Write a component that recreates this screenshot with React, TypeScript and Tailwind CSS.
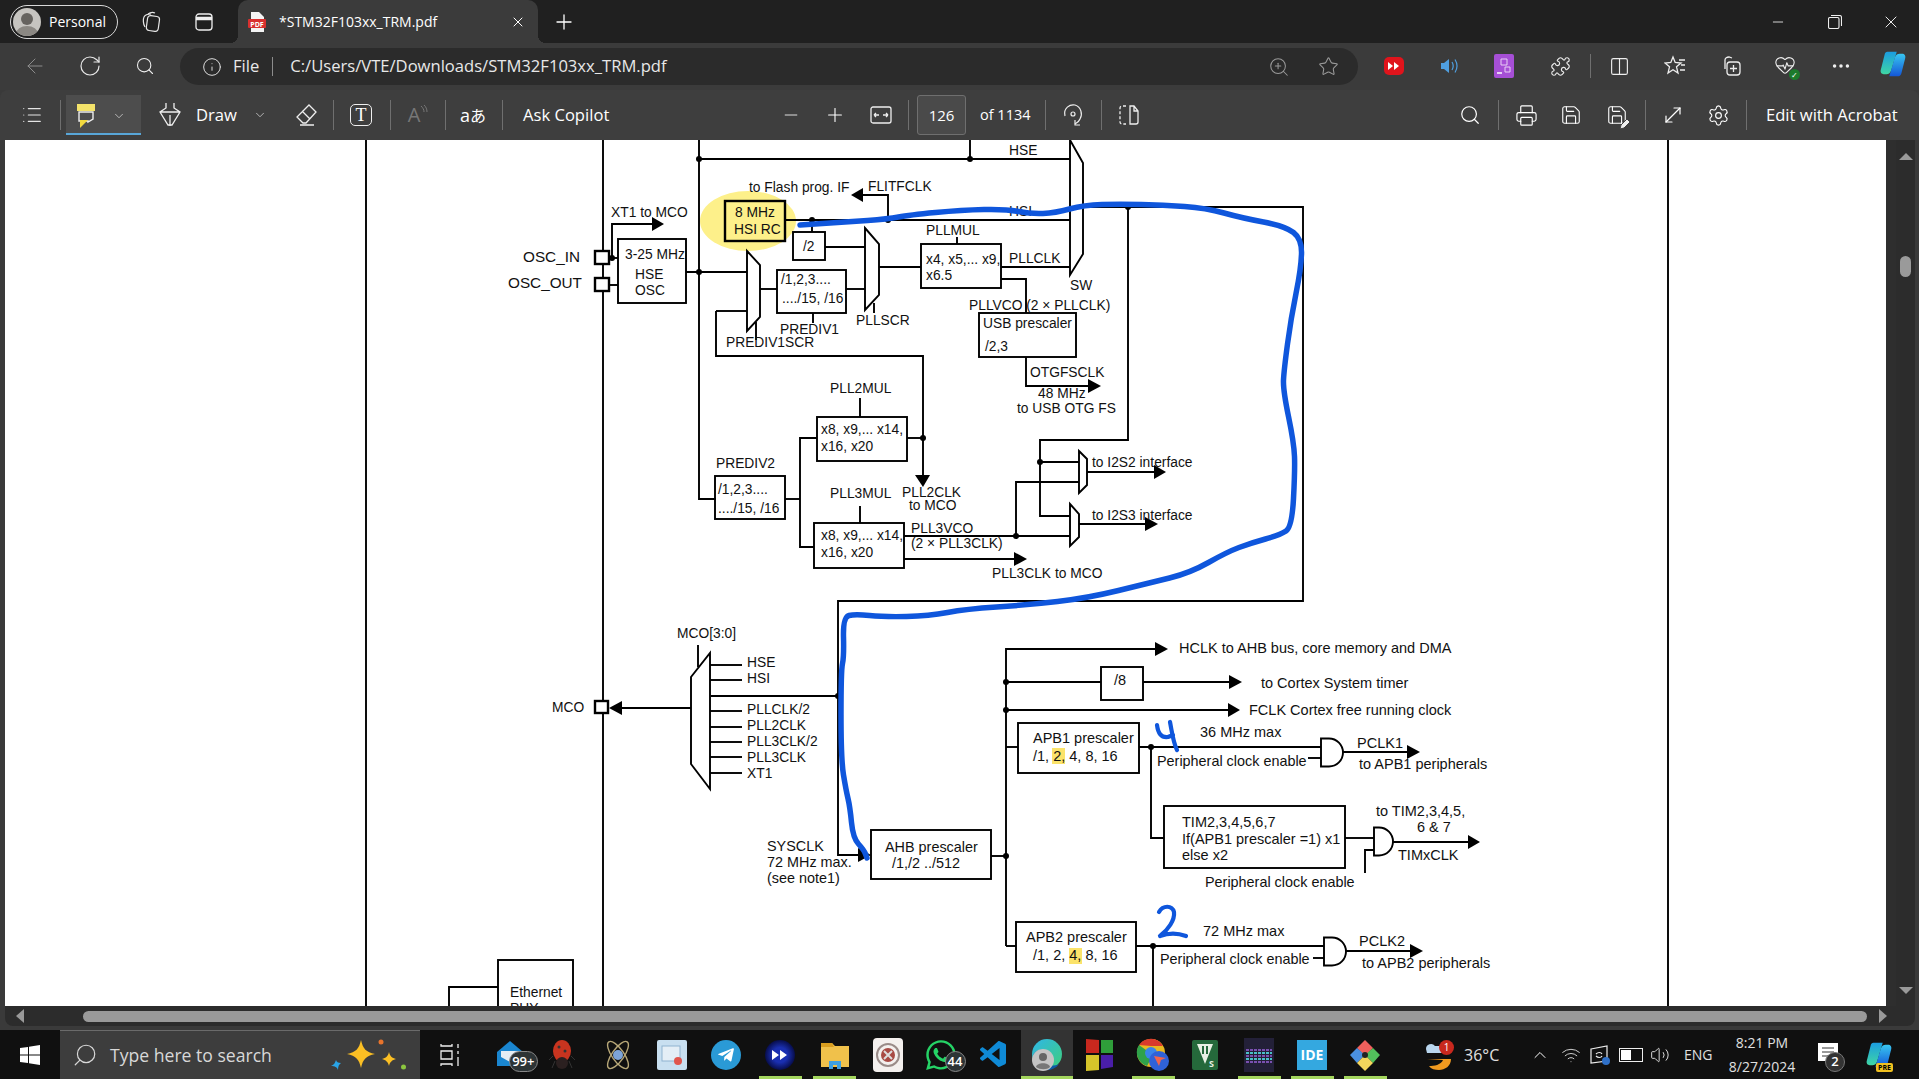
import { ArrowLeft, RotateCw, Search, Info, ZoomIn, Star, Puzzle, Columns2, Ellipsis, HeartPulse, Minus, Plus, Printer, Save, MoveDiagonal, Settings, X, ChevronDown, ChevronUp, Wifi, Volume2, List } from "lucide-react";
import { FaTelegramPlane, FaWhatsapp } from "react-icons/fa";
import { VscVscode } from "react-icons/vsc";

type P = [number, number];

function smooth(pts: P[]) {
  let d = `M${pts[0][0]} ${pts[0][1]}`;
  for (let i = 1; i < pts.length - 1; i++) {
    const mx = (pts[i][0] + pts[i + 1][0]) / 2;
    const my = (pts[i][1] + pts[i + 1][1]) / 2;
    d += ` Q${pts[i][0]} ${pts[i][1]} ${mx} ${my}`;
  }
  const last = pts[pts.length - 1];
  return d + ` L${last[0]} ${last[1]}`;
}

const bluePath: P[] = [
  [800, 225], [847, 222], [888, 219], [909, 215], [962, 210], [1006, 209], [1031, 214], [1055, 213], [1084, 205], [1120, 204],
  [1163, 205], [1206, 208], [1242, 218], [1285, 226], [1302, 239], [1301, 269], [1291, 318], [1284, 370], [1283, 390], [1294, 443],
  [1295, 470], [1292, 527], [1280, 535], [1251, 543], [1227, 552], [1190, 573], [1149, 583], [1088, 598], [1027, 605], [966, 609],
  [929, 616], [884, 617], [855, 614], [843, 617], [844, 657], [841, 670], [841, 760], [846, 790], [850, 807], [853, 838], [864, 850], [867, 858],
];

const wires = [
  "603,140 603,1006", "366,140 366,1006", "1668,140 1668,1006",
  "699,140 699,499 716,499", "699,159 1070,159", "970,140 970,159",
  "785,220 1070,220", "812,220 812,232", "888,220 888,195 862,195",
  "609,258 618,258", "609,285 618,285", "612,258 612,224 653,224",
  "686,272 747,272", "756,322 756,340", "716,311 747,311", "716,311 716,356 923,356 923,476",
  "760,289 777,289", "846,289 866,289", "813,313 813,323",
  "825,247 866,247", "874,303 874,313", "879,267 921,267", "957,237 957,244",
  "1001,267 1070,267", "1001,279 1026,279 1026,313", "1026,357 1026,386 1089,386",
  "860,398 860,417", "907,438 923,438", "817,438 800,438 800,547 814,547", "785,499 800,499",
  "860,506 860,523", "904,536 1070,536", "1016,536 1016,482 1079,482", "904,559 1014,559",
  "1083,207 1303,207 1303,601 838,601 838,855 859,855", "1128,207 1128,440 1040,440 1040,516 1070,516", "1040,462 1079,462",
  "1087,472 1155,472", "1079,524 1146,524",
  "622,708 691,708", "698,645 698,667", "710,665 742,665", "710,680 742,680", "711,696 838,696",
  "710,711 742,711", "710,727 742,727", "710,742 742,742", "710,757 742,757", "710,773 742,773",
  "991,856 1006,856", "1006,648 1006,946", "1006,649 1156,649", "1006,682 1101,682", "1143,682 1230,682", "1006,710 1228,710",
  "1006,747 1018,747", "1139,747 1321,747", "1308,758 1321,758", "1340,752 1408,752", "1151,747 1151,838 1164,838",
  "1345,838 1374,838", "1365,873 1365,850 1374,850", "1393,842 1469,842",
  "1006,946 1016,946", "1136,946 1324,946", "1313,958 1324,958", "1344,951 1411,951", "1153,946 1153,1006",
  "449,1006 449,987 498,987",
];

const boxes: number[][] = [
  [725, 201, 60, 40], [618, 239, 68, 64], [777, 270, 69, 43], [793, 232, 32, 28], [921, 244, 80, 44], [979, 313, 97, 44],
  [817, 417, 90, 44], [715, 476, 70, 43], [814, 523, 90, 45], [871, 830, 120, 49], [1101, 667, 42, 33], [1018, 723, 121, 50],
  [1164, 806, 181, 62], [1016, 922, 120, 50], [498, 960, 75, 60],
];

const pins: number[][] = [[595, 251, 14, 13], [595, 278, 14, 13], [595, 701, 13, 12]];

const muxes = [
  "747,251 760,265 760,317 747,331", "865,228 879,244 879,295 865,310", "1079,451 1087,459 1087,485 1079,493",
  "1070,504 1079,514 1079,537 1070,546", "691,677 710,653 710,789 691,764",
];

const arrows = [
  "851,195 863,188 863,202", "664,224 652,217 652,231", "1101,386 1088,379 1088,393", "923,487 915,475 930,475",
  "1166,472 1154,465 1154,479", "1158,524 1145,517 1145,531", "1027,559 1014,552 1014,566", "609,708 622,701 622,715",
  "871,855 858,848 858,862", "1168,649 1155,642 1155,656", "1242,682 1229,675 1229,689", "1240,710 1228,703 1228,717",
  "1420,752 1407,745 1407,759", "1480,842 1468,835 1468,849", "1423,951 1410,944 1410,958",
];

const dots: P[] = [[699, 159], [970, 159], [812, 220], [888, 220], [612, 258], [699, 272], [923, 438], [1016, 536], [1040, 462], [1128, 207], [838, 696], [1006, 682], [1006, 710], [1006, 856], [1151, 747], [1153, 946]];

const labels: [number, number, string, number?][] = [
  [1009, 155, "HSE"], [1070, 290, "SW"], [735, 217, "8 MHz"], [734, 234, "HSI RC"], [749, 192, "to Flash prog. IF"], [868, 191, "FLITFCLK"], [1009, 216, "HSI"],
  [625, 259, "3-25 MHz"], [635, 279, "HSE"], [635, 295, "OSC"], [523, 262, "OSC_IN", 15.3], [508, 288, "OSC_OUT", 15.3], [611, 217, "XT1 to MCO"],
  [726, 347, "PREDIV1SCR"], [781, 284, "/1,2,3...."], [782, 303, "..../15, /16"], [780, 334, "PREDIV1"], [803, 251, "/2"], [856, 325, "PLLSCR"],
  [926, 264, "x4, x5,... x9,"], [926, 280, "x6.5"], [926, 235, "PLLMUL"], [1009, 263, "PLLCLK"], [969, 310, "PLLVCO (2 × PLLCLK)"],
  [983, 328, "USB prescaler"], [985, 351, "/2,3"], [1030, 377, "OTGFSCLK"], [1038, 398, "48 MHz"], [1017, 413, "to USB OTG FS"],
  [830, 393, "PLL2MUL"], [821, 434, "x8, x9,... x14,"], [821, 451, "x16, x20"], [716, 468, "PREDIV2"], [718, 494, "/1,2,3...."], [718, 513, "..../15, /16"],
  [830, 498, "PLL3MUL"], [821, 540, "x8, x9,... x14,"], [821, 557, "x16, x20"], [902, 497, "PLL2CLK"], [909, 510, "to MCO"], [911, 533, "PLL3VCO"], [911, 548, "(2 × PLL3CLK)"],
  [992, 578, "PLL3CLK to MCO"], [1092, 467, "to I2S2 interface"], [1092, 520, "to I2S3 interface"],
  [552, 712, "MCO"], [677, 638, "MCO[3:0]"], [747, 667, "HSE"], [747, 683, "HSI"], [747, 714, "PLLCLK/2"], [747, 730, "PLL2CLK"], [747, 746, "PLL3CLK/2"], [747, 762, "PLL3CLK"], [747, 778, "XT1"],
  [767, 851, "SYSCLK", 14.4], [767, 867, "72 MHz max.", 14.4], [767, 883, "(see note1)", 14.4], [885, 852, "AHB prescaler", 14.4], [892, 868, "/1,/2 ../512", 14.4],
  [510, 997, "Ethernet"], [510, 1013, "PHY"],
  [1179, 653, "HCLK to AHB bus, core memory and DMA", 14.5], [1114, 685, "/8", 14.5], [1261, 688, "to Cortex System timer", 14.5], [1249, 715, "FCLK Cortex free running clock", 14.5],
  [1033, 743, "APB1 prescaler", 14.5], [1033, 761, "/1, 2, 4, 8, 16", 14.5], [1200, 737, "36 MHz max", 14.5], [1157, 766, "Peripheral clock enable", 14.4],
  [1357, 748, "PCLK1", 14.5], [1359, 769, "to APB1 peripherals", 14.5], [1182, 827, "TIM2,3,4,5,6,7", 14.5], [1182, 844, "If(APB1 prescaler =1) x1", 14.5], [1182, 860, "else x2", 14.5],
  [1376, 816, "to TIM2,3,4,5,", 14.5], [1417, 832, "6 & 7", 14.5], [1398, 860, "TIMxCLK", 14.5], [1205, 887, "Peripheral clock enable", 14.4],
  [1026, 942, "APB2 prescaler", 14.5], [1033, 960, "/1, 2, 4, 8, 16", 14.5], [1203, 936, "72 MHz max", 14.5], [1160, 964, "Peripheral clock enable", 14.4],
  [1359, 946, "PCLK2", 14.5], [1362, 968, "to APB2 peripherals", 14.5],
];

function ClockTree() {
  return (
    <svg viewBox="5 140 1881 866" className="h-full w-full [font-family:'Liberation_Sans',sans-serif]">
      <ellipse cx="748" cy="221" rx="48" ry="30" fill="#fdf08a" />
      <rect x="1052" y="748" width="13" height="16" fill="#fbe36a" />
      <rect x="1069" y="948" width="13" height="16" fill="#fbe36a" />
      <g fill="none" stroke="#000" strokeWidth="1.9">
        {wires.map((w) => <polyline key={w} points={w} />)}
        {boxes.map((b) => <rect key={b.join()} x={b[0]} y={b[1]} width={b[2]} height={b[3]} strokeWidth={b[0] === 725 ? 2.4 : 1.9} />)}
        {muxes.map((m) => <polygon key={m} points={m} fill="#fff" />)}
        <polyline points="1070,140 1083,163 1083,254 1070,275 1070,140" />
        <path d="M1321 738.5h8a14 14 0 0 1 0 28h-8z" fill="#fff" />
        <path d="M1374 827.5h5a14 14 0 0 1 0 28h-5z" fill="#fff" />
        <path d="M1324 937.5h8a14 14 0 0 1 0 28h-8z" fill="#fff" />
      </g>
      <g fill="#fff" stroke="#000" strokeWidth="2.4">
        {pins.map((p) => <rect key={p.join()} x={p[0]} y={p[1]} width={p[2]} height={p[3]} />)}
      </g>
      {arrows.map((a) => <polygon key={a} points={a} fill="#000" />)}
      {dots.map((d) => <circle key={d.join()} cx={d[0]} cy={d[1]} r="3" fill="#000" />)}
      {labels.map(([x, y, t, s]) => (
        <text key={`${x}-${y}`} x={x} y={y} fontSize={s ?? 13.8} fill="#111">{t}</text>
      ))}
      <g fill="none" stroke="#0f56dc" strokeLinecap="round" strokeLinejoin="round">
        <path d={smooth(bluePath)} strokeWidth="5.5" />
        <path d="M1157 725C1158 733 1161 738 1168 737L1173 735M1170 722C1172 732 1173 742 1177 750" strokeWidth="4.2" />
        <path d="M1159 912C1163 905 1172 905 1174 912C1175 920 1168 930 1160 936C1168 933 1178 933 1186 936" strokeWidth="4.2" />
      </g>
    </svg>
  );
}

function CopilotLogo({ size = 30 }: { size?: number }) {
  return (
    <svg width={size} height={size} viewBox="0 0 30 30">
      <defs>
        <linearGradient id="cpa" x1="0" y1="0" x2="0" y2="1"><stop offset="0" stopColor="#1b9de0" /><stop offset="1" stopColor="#3fd6a4" /></linearGradient>
        <linearGradient id="cpb" x1="0" y1="0" x2="0" y2="1"><stop offset="0" stopColor="#38c6f0" /><stop offset="1" stopColor="#1457d8" /></linearGradient>
      </defs>
      <path d="M9 2h10l-6 20c-1 3-3 4-5 4H5c-2 0-4-2-3-5L6 5c.5-2 1.5-3 3-3z" fill="url(#cpa)" />
      <path d="M21 28H11l6-20c1-3 3-4 5-4h3c2 0 4 2 3 5l-4 16c-.5 2-1.5 3-3 3z" fill="url(#cpb)" />
    </svg>
  );
}

function Sep() {
  return <div className="h-[30px] w-px shrink-0 bg-[#6f6f6f]" />;
}

function IconBox({ className = "", children }: { className?: string; children: React.ReactNode }) {
  return <div className={`flex h-7 w-7 shrink-0 items-center justify-center ${className}`}>{children}</div>;
}

function TitleBar() {
  return (
    <div className="flex h-[43px] shrink-0 items-center bg-[#202020] text-white">
      <div className="ml-[10px] flex h-[34px] w-[108px] items-center rounded-full border-[1.5px] border-[#d8d8d8]">
        <svg width="28" height="28" viewBox="0 0 28 28" className="ml-[2px]">
          <clipPath id="av"><circle cx="14" cy="14" r="14" /></clipPath>
          <g clipPath="url(#av)">
            <rect width="28" height="28" fill="#c6c4c0" />
            <circle cx="14" cy="11" r="6" fill="#66635f" />
            <ellipse cx="14" cy="26" rx="11" ry="8" fill="#8b8883" />
          </g>
        </svg>
        <span className="ml-[8px] text-[14px]">Personal</span>
      </div>
      <IconBox className="ml-[19px]">
        <svg width="22" height="22" viewBox="0 0 22 22" fill="none" stroke="#e6e6e6" strokeWidth="1.2">
          <rect x="7" y="5" width="12" height="15" rx="3" transform="rotate(8 13 12)" />
          <path d="M5 16C3 13 3 8 4 6c1-2 4-3 7-3" /><path d="M8 3c2-1.500 5-2 7-1" />
        </svg>
      </IconBox>
      <IconBox className="ml-[25px]">
        <svg width="18" height="18" viewBox="0 0 18 18" fill="none" stroke="#eee" strokeWidth="1.3">
          <rect x="1" y="1" width="16" height="16" rx="3" /><path d="M1 5.500h16" strokeWidth="3.500" />
        </svg>
      </IconBox>
      <div className="relative ml-5 flex h-[43px] w-[300px] items-center rounded-t-[10px] bg-[#3b3b3b] pl-[10px] text-[14px]">
        <div className="absolute bottom-0 -left-2 h-2 w-2 bg-[radial-gradient(circle_at_0_0,transparent_8px,#3b3b3b_8px)]" />
        <div className="absolute -right-2 bottom-0 h-2 w-2 bg-[radial-gradient(circle_at_100%_0,transparent_8px,#3b3b3b_8px)]" />
        <svg width="18" height="20" viewBox="0 0 18 20">
          <path d="M3 0h8l5 5v15H3z" fill="#f4f4f4" />
          <rect x="0" y="7" width="18" height="9" rx="1" fill="#d8302f" />
          <text x="9" y="14.500" textAnchor="middle" fontSize="7" fontWeight="700" fill="#fff">PDF</text>
        </svg>
        <span className="ml-[13px]">*STM32F103xx_TRM.pdf</span>
        <X size={16} strokeWidth={1.5} className="absolute left-[272px]" />
      </div>
      <IconBox className="ml-[12px]"><Plus size={24} strokeWidth={1.3} /></IconBox>
      <div className="ml-auto flex h-full">
        <div className="flex w-[57px] items-center justify-center"><Minus size={16} strokeWidth={1.2} /></div>
        <div className="flex w-[57px] items-center justify-center">
          <svg width="14" height="14" viewBox="0 0 14 14" fill="none" stroke="#eee" strokeWidth="1.1">
            <rect x="0.500" y="2.500" width="10.500" height="11" rx="1.500" /><path d="M3 .5h8.500a2 2 0 0 1 2 2V11" />
          </svg>
        </div>
        <div className="flex w-[56px] items-center justify-center"><X size={20} strokeWidth={1.1} /></div>
      </div>
    </div>
  );
}

function AddressBar() {
  return (
    <div className="flex h-[47px] shrink-0 items-start bg-[#3b3b3b] pt-[5px] text-white">
      <IconBox className="mt-1 ml-[21px]"><ArrowLeft size={24} strokeWidth={1} className="text-[#8c8c8c]" /></IconBox>
      <IconBox className="mt-1 ml-[27px]"><RotateCw size={24} strokeWidth={1.2} className="text-[#e8e8e8]" /></IconBox>
      <IconBox className="mt-1 ml-[27px]"><Search size={20} strokeWidth={1.3} className="text-[#eee]" /></IconBox>
      <div className="ml-[21px] flex h-[37px] w-[1178px] items-center rounded-full bg-[#2b2b2b]">
        <Info size={20} strokeWidth={1.2} className="ml-[22px] text-[#ddd]" />
        <span className="ml-[11px] text-[16.6px] text-[#e8e8e8]">File</span>
        <div className="ml-[13px] h-[19px] w-px bg-[#8c8c8c]" />
        <span className="ml-[17px] text-[16.6px] text-[#e8e8e8]">C:/Users/VTE/Downloads/STM32F103xx_TRM.pdf</span>
        <ZoomIn size={22} strokeWidth={1.1} className="mr-[28px] ml-auto text-[#9a9a9a]" />
        <Star size={21} strokeWidth={1.2} className="mr-[19px] text-[#9a9a9a]" />
      </div>
      <IconBox className="mt-1 ml-[22px]">
        <svg width="20" height="18" viewBox="0 0 20 18"><rect width="20" height="18" rx="5" fill="#e0141c" /><path d="M4 5l5 4-5 4zM10 5l5 4-5 4z" fill="#fff" /></svg>
      </IconBox>
      <IconBox className="mt-1 ml-[27px]">
        <svg width="18" height="18" viewBox="0 0 18 18" fill="none"><path d="M1 6h3l5-4v14l-5-4H1z" fill="#4f9fe0" /><path d="M12 5c1.500 2.500 1.500 5.500 0 8M15 2.500c2.500 4 2.500 9 0 13" stroke="#4f9fe0" strokeWidth="1.200" /></svg>
      </IconBox>
      <IconBox className="mt-1 ml-[27px]">
        <svg width="20" height="24" viewBox="0 0 20 24"><rect width="20" height="24" rx="2" fill="#a64fd6" /><path d="M7 5h6v6H7zM11 13h5v5h-5z" fill="none" stroke="#e8d0f5" strokeWidth="1" /><path d="M3 19h5" stroke="#e8d0f5" strokeWidth="2" /></svg>
      </IconBox>
      <IconBox className="mt-1 ml-[28px]"><Puzzle size={21} strokeWidth={1.3} className="text-[#eee]" /></IconBox>
      <div className="mt-[6px] ml-4"><div className="h-6 w-px bg-[#6f6f6f]" /></div>
      <IconBox className="mt-1 ml-[14px]"><Columns2 size={21} strokeWidth={1.3} className="text-[#eee]" /></IconBox>
      <IconBox className="mt-1 ml-[28px]">
        <svg width="22" height="22" viewBox="0 0 22 22" fill="none" stroke="#eee" strokeWidth="1.300"><path d="M9 2l2.200 5.500L17 8l-4.500 3.800L14 18l-5-3.300L4 18l1.500-6.200L1 8l5.800-.5z" /><path d="M15 5h6M17 10h4M16 15h5" /></svg>
      </IconBox>
      <IconBox className="mt-1 ml-[28px]">
        <svg width="22" height="22" viewBox="0 0 22 22" fill="none" stroke="#eee" strokeWidth="1.300"><path d="M5 14V5c0-2 2-3 4-3l3 1" /><rect x="7" y="7" width="13" height="13" rx="3" /><path d="M13.500 10v7M10 13.500h7" /></svg>
      </IconBox>
      <div className="relative mt-1 ml-[27px] h-7 w-7">
        <HeartPulse size={22} strokeWidth={1.2} className="mt-[2px] ml-[2px] text-[#eee]" />
        <div className="absolute right-0 bottom-0 flex h-[11px] w-[11px] items-center justify-center rounded-full bg-[#1c7a2c] text-[8px] leading-none text-white">✓</div>
      </div>
      <IconBox className="mt-1 ml-[27px]"><Ellipsis size={22} strokeWidth={1.8} className="text-[#eee]" /></IconBox>
      <IconBox className="mt-[2px] ml-6"><CopilotLogo /></IconBox>
    </div>
  );
}

function PdfToolbar() {
  return (
    <div className="flex h-[50px] shrink-0 items-center rounded-t-lg bg-[#3e3e3e] text-[16.6px] text-white">
      <IconBox className="ml-[18px]"><List size={22} strokeWidth={1.3} className="text-[#e4e4e4]" /></IconBox>
      <div className="ml-[14px]"><Sep /></div>
      <div className="ml-[5px] flex h-[40px] w-[75px] items-center border-b-2 border-[#58a6d8] bg-[#4d4d4d]">
        <svg width="20" height="26" viewBox="0 0 20 26" className="mt-[3px] ml-[10px]">
          <path d="M1 1h18v7H1z" fill="#f4e36a" /><path d="M3 9h14v7l-5 3v-1H3z" fill="none" stroke="#eee" strokeWidth="1.400" />
          <path d="M4 17h8l-8 8z" fill="#f2d93e" />
        </svg>
        <ChevronDown size={14} strokeWidth={1.4} className="mt-[3px] ml-[16px] text-[#ccc]" />
      </div>
      <IconBox className="ml-[15px]">
        <svg width="22" height="26" viewBox="0 0 22 26" fill="none" stroke="#eee" strokeWidth="1.300"><path d="M7 1v5l-6 4 8 13h4l8-13-6-4V1M1 10h20M11 13v11" /></svg>
      </IconBox>
      <span className="ml-[12px] w-[40px]">Draw</span>
      <ChevronDown size={14} strokeWidth={1.4} className="ml-[17px] text-[#ccc]" />
      <IconBox className="ml-[25px]">
        <svg width="22" height="24" viewBox="0 0 22 24" fill="none" stroke="#eee" strokeWidth="1.300"><path d="M14 2l7 7-10 11H8L2 14zM7 8l8 8M5 22h14" /></svg>
      </IconBox>
      <div className="ml-[13px]"><Sep /></div>
      <IconBox className="ml-[13px]">
        <div className="flex h-[22px] w-[22px] items-center justify-center rounded-[5px] border-[1.5px] border-[#eee] text-[18px] leading-none [font-family:'Liberation_Serif',serif]">T</div>
      </IconBox>
      <div className="ml-[15px]"><Sep /></div>
      <IconBox className="ml-[13px] text-[#777]">
        <span className="text-[20px]">A</span>
        <svg width="8" height="14" viewBox="0 0 8 14" fill="none" stroke="#777" className="-mt-2"><path d="M1 2c2 2 3 3.500 3 6M4 1c2 2 3 4 3 7" /></svg>
      </IconBox>
      <div className="ml-[13px]"><Sep /></div>
      <IconBox className="ml-[13px] text-[18px]"><span>a</span><span className="text-[16px] [font-family:'Noto_Sans_CJK_JP',sans-serif]">あ</span></IconBox>
      <div className="ml-[15px]"><Sep /></div>
      <span className="ml-5 w-[88px] whitespace-nowrap">Ask Copilot</span>

      <IconBox className="ml-[166px]"><Minus size={20} strokeWidth={1.2} className="text-[#ddd]" /></IconBox>
      <IconBox className="ml-4"><Plus size={22} strokeWidth={1.2} /></IconBox>
      <IconBox className="ml-[18px]">
        <svg width="22" height="18" viewBox="0 0 22 18" fill="none" stroke="#eee" strokeWidth="1.300"><rect x="1" y="1" width="20" height="16" rx="2" /><path d="M4 9h5M4 9l2-2M4 9l2 2M18 9h-5M18 9l-2-2M18 9l-2 2" /></svg>
      </IconBox>
      <div className="ml-[13px]"><Sep /></div>
      <div className="ml-2 flex h-[40px] w-[49px] shrink-0 items-center justify-center rounded-[3px] border border-[#6f6f6f] bg-[#4a4a4a] text-[15px]">126</div>
      <span className="ml-[14px] w-[49px] text-[14.5px] whitespace-nowrap">of 1134</span>
      <div className="ml-4"><Sep /></div>
      <IconBox className="ml-[13px]">
        <svg width="22" height="26" viewBox="0 0 22 26" fill="none" stroke="#eee" strokeWidth="1.200"><path d="M3 14C1 6 8 2 13 3c6 2 8 9 5 14-1 3-3 4-5 5" /><circle cx="11" cy="12" r="2" /><path d="M13 18v5h5" /></svg>
      </IconBox>
      <div className="ml-[14px]"><Sep /></div>
      <IconBox className="ml-[13px]">
        <svg width="20" height="20" viewBox="0 0 20 20" fill="none" stroke="#eee" strokeWidth="1.300"><path d="M7 1H3a2 2 0 0 0-2 2v14a2 2 0 0 0 2 2h4" strokeDasharray="3 2" /><path d="M11 1h4l4 5v11a2 2 0 0 1-2 2h-6zM15 1v5h4" /></svg>
      </IconBox>

      <IconBox className="ml-[313px]"><Search size={22} strokeWidth={1.3} /></IconBox>
      <div className="ml-[14px]"><Sep /></div>
      <IconBox className="ml-[13px]"><Printer size={23} strokeWidth={1.2} /></IconBox>
      <IconBox className="ml-[17px]"><Save size={22} strokeWidth={1.2} /></IconBox>
      <IconBox className="ml-[18px]">
        <div className="relative">
          <Save size={22} strokeWidth={1.2} />
          <svg width="13" height="13" viewBox="0 0 13 13" className="absolute -right-1 -bottom-1"><path d="M1 12l1-4 6-6 3 3-6 6z" fill="#eee" stroke="#3e3e3e" /></svg>
        </div>
      </IconBox>
      <div className="ml-[14px]"><Sep /></div>
      <IconBox className="ml-[13px]"><MoveDiagonal size={24} strokeWidth={1.2} /></IconBox>
      <IconBox className="ml-[17px]"><Settings size={23} strokeWidth={1.2} /></IconBox>
      <div className="ml-[14px]"><Sep /></div>
      <span className="ml-[19px] whitespace-nowrap">Edit with Acrobat</span>
    </div>
  );
}

function PdfViewer() {
  return (
    <div className="flex min-h-0 flex-1">
      <div className="w-[5px] shrink-0 bg-[#3a3a3a]" />
      <div className="min-w-0 flex-1 overflow-hidden bg-white"><ClockTree /></div>
      <div className="flex w-[33px] shrink-0 bg-[#2e2e2e]">
        <div className="w-[10px]" />
        <div className="flex w-[19px] flex-col items-center bg-[#2c2c2c] pt-[13px]">
          <div className="h-0 w-0 border-x-[7px] border-b-[7px] border-x-transparent border-b-[#9a9a9a]" />
          <div className="mt-[96px] h-[21px] w-[11px] rounded-full bg-[#9a9a9a]" />
          <div className="mt-auto mb-[12px] h-0 w-0 border-x-[7px] border-t-[7px] border-x-transparent border-t-[#9a9a9a]" />
        </div>
        <div className="w-1 bg-[#3a3a3a]" />
      </div>
    </div>
  );
}

function HScrollBar() {
  return (
    <div className="h-6 shrink-0 bg-[#3a3a3a] pr-1 pb-1 pl-[5px]">
      <div className="flex h-5 items-center rounded-b-lg bg-[#2c2c2c] pl-[11px]">
        <div className="h-0 w-0 border-y-[7px] border-r-[8px] border-y-transparent border-r-[#9a9a9a]" />
        <div className="ml-[59px] h-[11px] w-[1784px] rounded-full bg-[#9a9a9a]" />
        <div className="ml-[12px] h-0 w-0 border-y-[7px] border-l-[8px] border-y-transparent border-l-[#9a9a9a]" />
      </div>
    </div>
  );
}

function Slot({ ml, on, wide, children }: { ml: string; on?: boolean; wide?: boolean; children: React.ReactNode }) {
  return (
    <div className={`relative flex h-full shrink-0 items-center justify-center border-b-[3px] pt-[3px] ${ml} ${wide ? "w-[52px] bg-[#333]" : "w-[43px]"} ${on ? "border-[#a4d65e]" : "border-transparent"}`}>
      {children}
    </div>
  );
}

function Badge({ text }: { text: string }) {
  return (
    <div className="absolute right-[-3px] bottom-[4px] flex h-[21px] min-w-[21px] items-center justify-center rounded-full border border-[#888] bg-[#2d3436] px-[2px] text-[13px] font-semibold text-white">{text}</div>
  );
}

function Taskbar() {
  return (
    <div className="flex h-[49px] shrink-0 items-center bg-[#101010] text-white">
      <div className="flex h-full w-[60px] shrink-0 items-center justify-center">
        <svg width="20" height="20" viewBox="0 0 20 20" fill="#fff"><path d="M0 3l8-1v7.500H0zM9 1.800L20 0v9.500H9zM0 10.500h8V18l-8-1zM9 10.500h11V20L9 18.200z" /></svg>
      </div>
      <div className="flex h-full w-[360px] shrink-0 items-center border-t border-[#6a6a6a] bg-[#3d3d3d] text-[#d8d8d8]">
        <Search size={26} strokeWidth={1.1} className="ml-[12px] -scale-x-100" />
        <span className="ml-[12px] text-[17.6px]">Type here to search</span>
        <svg width="80" height="48" viewBox="328 1031 80 48" className="mr-[12px] ml-auto">
          <path d="M361 1040c2 9 5 12 14 14-9 2-12 5-14 14-2-9-5-12-14-14 9-2 12-5 14-14z" fill="#fbbf24" />
          <path d="M389 1052c1 4 3 6 7 7-4 1-6 3-7 7-1-4-3-6-7-7 4-1 6-3 7-7z" fill="#fbbf24" />
          <path d="M336 1060c.5 2 2 3 5 3-2 1.500-3 3-3 7-1-3-3-4-7-4 3-1 4-3 5-6z" fill="#2aa5e8" />
          <circle cx="381" cy="1042" r="2.500" fill="#e8742c" /><circle cx="403.500" cy="1067" r="2.500" fill="#8cc63f" />
        </svg>
      </div>
      <Slot ml="ml-[8.5px]">
        <svg width="20" height="24" viewBox="0 0 20 24" fill="none" stroke="#eee" strokeWidth="1.300"><path d="M1 1v2h11V1M1 8h11v8H1zM1 23v-2h11v2M18 1v4M18 8v3M18 14v9" /></svg>
      </Slot>
      <Slot ml="ml-5">
        <svg width="30" height="30" viewBox="0 0 30 30" className="-ml-[6px]"><path d="M2 12L15 1l13 11v14H2z" fill="#1a86d0" /><path d="M6 11h18v6l-9 5-9-5z" fill="#e6eef4" /></svg>
        <Badge text="99+" />
      </Slot>
      <Slot ml="ml-[6px]">
        <svg width="30" height="34" viewBox="0 0 30 34"><ellipse cx="15" cy="13" rx="9" ry="11" fill="#c8341f" /><circle cx="12" cy="9" r="1.500" fill="#333" /><circle cx="18" cy="13" r="1.500" fill="#333" /><path d="M6 18l-4 4M24 18l4 4M8 23l-3 7M22 23l3 7" stroke="#333" /><ellipse cx="15" cy="25" rx="6" ry="6" fill="#2b2020" /></svg>
      </Slot>
      <Slot ml="ml-[13px]">
        <svg width="32" height="34" viewBox="0 0 32 34" fill="none" stroke="#b8a878" strokeWidth="1.400"><ellipse cx="16" cy="17" rx="6" ry="16" transform="rotate(35 16 17)" /><ellipse cx="16" cy="17" rx="6" ry="16" transform="rotate(-35 16 17)" /><circle cx="16" cy="17" r="5" fill="#7da4d8" stroke="none" /></svg>
      </Slot>
      <Slot ml="ml-[11px]">
        <svg width="30" height="30" viewBox="0 0 30 30"><rect width="30" height="30" rx="2" fill="#c8dff0" /><rect x="5" y="6" width="18" height="15" fill="#e4eef6" stroke="#8fb3d0" /><circle cx="21" cy="21" r="4" fill="#e0554c" /></svg>
      </Slot>
      <Slot ml="ml-[11px]">
        <div className="flex h-[30px] w-[30px] items-center justify-center rounded-full bg-[#2a9ad6]"><FaTelegramPlane size={18} className="text-white" /></div>
      </Slot>
      <Slot ml="ml-[11px]" on>
        <svg width="30" height="30" viewBox="0 0 30 30"><defs><radialGradient id="ff" cy="0.5"><stop offset="0.500" stopColor="#1a2fb0" /><stop offset="1" stopColor="#070d4a" /></radialGradient></defs><circle cx="15" cy="15" r="15" fill="url(#ff)" /><path d="M7 10l7 5-7 5zM15 10l7 5-7 5z" fill="#fff" /></svg>
      </Slot>
      <Slot ml="ml-[11.5px]" on>
        <svg width="30" height="28" viewBox="0 0 30 28"><path d="M1 2h11l3 3h14v21H1z" fill="#f0c14b" /><path d="M1 2h11l2 4H1z" fill="#d99e1f" /><path d="M9 20h12v8h-4v-4h-4v4H9z" fill="#3f9fe0" /></svg>
      </Slot>
      <Slot ml="ml-[10.5px]">
        <svg width="30" height="34" viewBox="0 0 30 34"><rect width="30" height="34" rx="4" fill="#f4f0ee" /><circle cx="15" cy="17" r="11" fill="none" stroke="#9a8b88" strokeWidth="2" /><circle cx="15" cy="17" r="7" fill="#a84a44" /><path d="M11 13l8 8M19 13l-8 8" stroke="#ddd" strokeWidth="2" /></svg>
      </Slot>
      <Slot ml="ml-[10px]">
        <FaWhatsapp size={34} className="text-[#25d366]" />
        <Badge text="44" />
      </Slot>
      <Slot ml="ml-[10px]"><VscVscode size={32} className="text-[#0f8ad6]" /></Slot>
      <Slot ml="ml-[5.5px]" on wide>
        <svg width="32" height="34" viewBox="0 0 32 34"><defs><linearGradient id="edg" x1="0" y1="0" x2="1" y2="1"><stop offset="0" stopColor="#2fb6e8" /><stop offset="1" stopColor="#3ecf7a" /></linearGradient></defs><circle cx="16" cy="16" r="15" fill="url(#edg)" /><path d="M2 18c0 8 6 14 14 14 5 0 9-2 12-6-6 3-16 2-18-5-1-4 2-8 6-8-6-3-13 0-14 5z" fill="#0c59a4" /><circle cx="12" cy="22" r="11" fill="#c4c4c4" /><circle cx="12" cy="19" r="4" fill="#666" /><path d="M5 29c1-5 13-5 14 0-3 3-10 3-14 0z" fill="#777" /></svg>
      </Slot>
      <Slot ml="ml-[5.5px]">
        <svg width="30" height="34" viewBox="0 0 30 34"><path d="M1 1l13 1v13H1z" fill="#c8281e" /><path d="M16 2l12 0v13H16z" fill="#2f9e3a" /><path d="M1 17h13v15l-13 1z" fill="#d6c52a" /><path d="M16 17h12v12l-12 2z" fill="#4a1ea8" /></svg>
      </Slot>
      <Slot ml="ml-[10px]" on>
        <svg width="34" height="34" viewBox="0 0 34 34"><circle cx="15" cy="15" r="14" fill="#e8b920" /><path d="M15 1a14 14 0 0 1 12 7H15z" fill="#e8b920" /><path d="M3 7a14 14 0 0 0 8 21l6-11z" fill="#2fa24a" /><path d="M3 7a14 14 0 0 1 24 1H15z" fill="#d93a2c" /><circle cx="15" cy="15" r="6" fill="#3a85e8" /><circle cx="23" cy="23" r="10" fill="#2f62d8" /><path d="M18 18l12 2-5 2-2 6z" fill="#f0644c" /></svg>
      </Slot>
      <Slot ml="ml-[9px]">
        <svg width="26" height="30" viewBox="0 0 26 30"><rect width="26" height="30" rx="2" fill="#25693b" /><path d="M5 4h16l-8 20z" fill="#e8f0e4" /><path d="M11 6v8M15 6v8" stroke="#25693b" strokeWidth="2" /><text x="17" y="27" fontSize="9" fill="#e8f0e4" fontWeight="700">S</text></svg>
      </Slot>
      <Slot ml="ml-[11px]" on>
        <svg width="30" height="34" viewBox="0 0 30 34"><rect width="30" height="34" fill="#232038" />{[12, 15, 18, 21, 24].map((y) => <path key={y} d={`M2 ${y}H28`} stroke={y % 2 ? "#4ac0c8" : "#7a50b0"} strokeWidth="2" strokeDasharray="3 1" />)}</svg>
      </Slot>
      <Slot ml="ml-[10px]" on>
        <div className="flex h-[30px] w-[30px] items-center justify-center bg-[#34a8e0] text-[14px] font-bold text-white">IDE</div>
      </Slot>
      <Slot ml="ml-[10px]" on>
        <svg width="32" height="34" viewBox="0 0 32 34"><path d="M16 2L8 10l8 8 8-8z" fill="#f0605c" /><path d="M8 10l-7 7 7 8 8-8z" fill="#4a90e0" /><path d="M24 10l7 7-7 8-8-8z" fill="#52c05c" /><path d="M16 17l-8 8 8 8 8-8z" fill="#f4d65c" /><circle cx="16" cy="17" r="3" fill="#222" /></svg>
      </Slot>

      <div className="relative ml-[37.5px] h-7 w-7 shrink-0">
        <svg width="28" height="32" viewBox="0 0 28 32" className="-mt-[2px]"><path d="M2 10a5 5 0 0 1 9-3h12v7H3z" fill="#b9d6ee" /><path d="M3 20h24c0 7-6 11-12 11-4 0-8-1-10-4 5 0 12-1 14-6z" fill="#f29a1f" /></svg>
        <div className="absolute -top-[1px] -right-[2px] flex h-[15px] w-[15px] items-center justify-center rounded-full bg-[#c8281e] text-[10px]">1</div>
      </div>
      <span className="ml-3 w-9 shrink-0 text-[16px] whitespace-nowrap text-[#e0e0e0]">36°C</span>
      <ChevronUp size={20} strokeWidth={1.2} className="ml-[30px] shrink-0" />
      <Wifi size={20} strokeWidth={1.2} className="ml-[11px] shrink-0 text-[#ccc]" />
      <div className="relative ml-[9px] h-5 w-5 shrink-0">
        <svg width="20" height="20" viewBox="0 0 20 20" fill="none" stroke="#eee" strokeWidth="1.200"><path d="M1 4l16-3v15L1 18zM6 9c2-2 5-2 6 0M12 11c-1 2-4 2-6 0" /></svg>
        <div className="absolute right-0 bottom-0 h-2 w-2 rounded-full bg-[#2f70c8]" />
      </div>
      <div className="ml-[9px] flex h-[14px] w-6 shrink-0 items-center border border-[#eee] pl-[1px]"><div className="h-[10px] w-[10px] bg-white" /></div>
      <Volume2 size={20} strokeWidth={1.1} className="ml-[7px] shrink-0 text-[#eee]" />
      <span className="ml-[14px] w-7 shrink-0 text-[14px] text-[#e0e0e0]">ENG</span>
      <div className="ml-[10px] flex w-20 shrink-0 flex-col items-center text-[14px] leading-[24px] text-[#e0e0e0]">
        <span>8:21 PM</span>
        <span>8/27/2024</span>
      </div>
      <div className="relative ml-4 h-6 w-6 shrink-0">
        <svg width="20" height="20" viewBox="0 0 20 20"><path d="M0 0h20v18H0z" fill="#fff" /><path d="M4 5h12M4 9h12M4 13h8" stroke="#333" /></svg>
        <div className="absolute -right-[3px] -bottom-[5px] flex h-[20px] w-[20px] items-center justify-center rounded-full border border-[#777] bg-[#333] text-[13px] font-semibold">2</div>
      </div>
      <div className="relative ml-[23px] h-7 w-7 shrink-0">
        <CopilotLogo size={28} />
        <div className="absolute right-0 -bottom-[3px] rounded-[2px] bg-[#f0c020] px-[2px] text-[7px] leading-[9px] font-bold text-black">PRE</div>
      </div>
    </div>
  );
}

export default function App() {
  return (
    <div className="flex h-screen w-screen flex-col overflow-hidden bg-[#3a3a3a] [font-family:'Open_Sans',sans-serif]">
      <TitleBar />
      <AddressBar />
      <PdfToolbar />
      <PdfViewer />
      <HScrollBar />
      <Taskbar />
    </div>
  );
}
